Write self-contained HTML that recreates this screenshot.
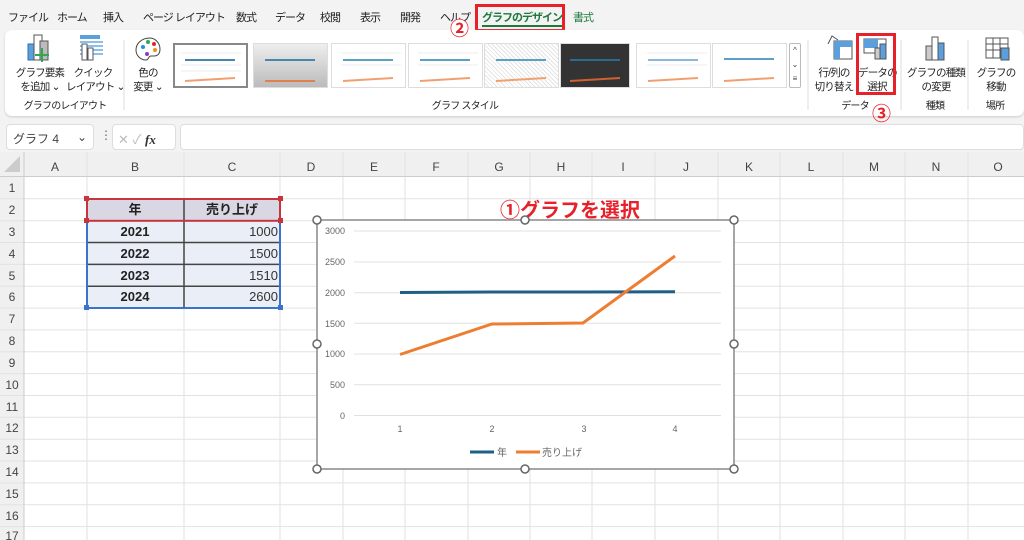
<!DOCTYPE html>
<html><head><meta charset="utf-8"><style>
*{margin:0;padding:0;box-sizing:border-box}
body{width:1024px;height:540px;overflow:hidden;background:#f3f3f3;font-family:"Liberation Sans","Noto Sans CJK JP",sans-serif;position:relative;color:#222}
.a{position:absolute;white-space:nowrap}
.tab{position:absolute;top:9px;font-size:11px;letter-spacing:-1px;color:#222}
.lbl{font-size:10.5px;letter-spacing:-0.8px;text-align:center;line-height:14px;color:#222}
.th{position:absolute;top:43px;width:75px;height:45px;background:#fff;border:1px solid #ddd}
</style></head><body>
<!-- tabs -->
<div class="tab" style="left:8px">ファイル</div>
<div class="tab" style="left:57px">ホーム</div>
<div class="tab" style="left:103px">挿入</div>
<div class="tab" style="left:143px">ページ レイアウト</div>
<div class="tab" style="left:236px">数式</div>
<div class="tab" style="left:275px">データ</div>
<div class="tab" style="left:320px">校閲</div>
<div class="tab" style="left:360px">表示</div>
<div class="tab" style="left:400px">開発</div>
<div class="tab" style="left:440px">ヘルプ</div>
<div class="a" style="left:475px;top:4px;width:90px;height:28px;border:3px solid #e8202a;background:#f3f3f3"></div>
<div class="tab" style="left:482px;color:#1e7a3c;font-weight:bold;font-size:11px;border-bottom:2px solid #1e7a3c">グラフのデザイン</div>
<div class="tab" style="left:573px;color:#1e7a3c">書式</div>
<!-- ribbon -->
<div class="a" style="left:5px;top:30px;width:1019px;height:86px;background:#fff;border-radius:7px;box-shadow:0 1px 2px #ccc"></div>
<div class="a" style="left:450px;top:19px;font-size:19px;color:#e8202a;font-weight:bold;background:#fff;border-radius:50%;line-height:22px">②</div>
<svg class="a" style="left:0;top:30px" width="1024" height="90">
<g fill="none">
<rect x="28" y="14" width="8" height="16" fill="#5ba0dc" stroke="#2d6fb0"/><rect x="34" y="5" width="8" height="25" fill="#fff" stroke="#555"/><rect x="40" y="11" width="8" height="19" fill="#bbb" stroke="#555"/><path d="M42 18v14M35 25h14" stroke="#2fa84f" stroke-width="2"/>
<rect x="80" y="5" width="20" height="4" fill="#5ba0dc"/><path d="M80 12h23M80 16h23M80 20h23M80 24h23" stroke="#8cc0ea" stroke-width="2"/><rect x="82" y="14" width="5" height="16" fill="#fff" stroke="#555"/><rect x="88" y="18" width="5" height="12" fill="#fff" stroke="#555"/>
<path d="M150 8c-9 0-14 6-14 12s5 10 10 10c3 0 2-4 5-4s9 1 9-7c0-6-5-11-10-11z" fill="#fff" stroke="#444"/>
<circle cx="143" cy="17" r="2" fill="#2c8de0"/><circle cx="148" cy="12" r="2" fill="#2fa84f"/><circle cx="154" cy="14" r="2" fill="#e8202a"/><circle cx="155" cy="20" r="2" fill="#e89020"/><circle cx="147" cy="24" r="2" fill="#8a3dc0"/>
<path d="M124 10v70M808 10v70M901 10v70M968 10v70" stroke="#ddd"/>
<rect x="834" y="11" width="18" height="18" fill="#fff" stroke="#555"/><rect x="834" y="11" width="18" height="6" fill="#5ba0dc"/><rect x="834" y="11" width="6" height="18" fill="#5ba0dc"/><path d="M828 14l4-8 6 4" stroke="#555"/>
<rect x="864" y="9" width="22" height="14" fill="#fff" stroke="#555"/><rect x="864" y="9" width="14" height="9" fill="#5ba0dc"/><rect x="875" y="18" width="5" height="11" fill="#ccc" stroke="#555"/><rect x="880" y="14" width="6" height="15" fill="#5ba0dc" stroke="#555"/>
<rect x="926" y="16" width="6" height="14" fill="#ccc" stroke="#555"/><rect x="932" y="7" width="6" height="23" fill="#fff" stroke="#555"/><rect x="938" y="13" width="6" height="17" fill="#5ba0dc" stroke="#555"/>
<rect x="986" y="8" width="22" height="20" fill="#fff" stroke="#555"/><path d="M986 14h22M986 20h22M993 8v20M1000 8v20" stroke="#555"/><rect x="1001" y="18" width="8" height="12" fill="#5ba0dc" stroke="#555"/>
</g></svg>
<div class="a lbl" style="left:14px;top:66px;width:52px">グラフ要素<br>を追加 ⌄</div>
<div class="a lbl" style="left:66px;top:66px;width:54px">クイック<br>レイアウト ⌄</div>
<div class="a lbl" style="left:128px;top:66px;width:40px">色の<br>変更 ⌄</div>
<div class="a lbl" style="left:20px;top:100px;width:90px;font-size:10px">グラフのレイアウト</div>
<div class="a lbl" style="left:420px;top:100px;width:90px;font-size:10px">グラフ スタイル</div>
<div class="a lbl" style="left:810px;top:66px;width:48px">行/列の<br>切り替え</div>
<div class="a lbl" style="left:858px;top:66px;width:38px">データの<br>選択</div>
<div class="a" style="left:856px;top:33px;width:40px;height:62px;border:3px solid #e8202a"></div>
<div class="a lbl" style="left:835px;top:100px;width:40px;font-size:10px">データ</div>
<div class="a" style="left:872px;top:99px;font-size:19px;color:#e8202a;font-weight:bold">③</div>
<div class="a lbl" style="left:905px;top:66px;width:62px">グラフの種類<br>の変更</div>
<div class="a lbl" style="left:915px;top:100px;width:40px;font-size:10px">種類</div>
<div class="a lbl" style="left:972px;top:66px;width:48px">グラフの<br>移動</div>
<div class="a lbl" style="left:975px;top:100px;width:40px;font-size:10px">場所</div>
<!-- gallery -->
<div class="th" style="left:173px;border:2px solid #888"></div>
<div class="th" style="left:253px;background:linear-gradient(#eee,#bbb)"></div>
<div class="th" style="left:331px"></div>
<div class="th" style="left:408px"></div>
<div class="th" style="left:484px;background:repeating-linear-gradient(45deg,#fff 0 2px,#e4e4e4 2px 3px)"></div>
<div class="th" style="left:560px;background:#333;width:70px"></div>
<div class="th" style="left:636px"></div>
<div class="th" style="left:712px"></div>
<svg class="a" style="left:173px;top:43px" width="620" height="45">
<g stroke="#eee"><path d="M8 10h60M8 22h60M8 28h60M168 10h60M168 22h60M245 10h60M245 22h60M474 10h60M474 22h60"/></g>
<g stroke-width="2">
<path d="M12 17h50" stroke="#4a86ab"/><path d="M12 38l50-3" stroke="#f0a070"/>
<path d="M92 17h50" stroke="#4a86ab"/><path d="M92 38h50" stroke="#e08050"/>
<path d="M170 17h50" stroke="#5aa0c8"/><path d="M170 38l50-3" stroke="#f0a070"/>
<path d="M247 17h50" stroke="#5aa0c8"/><path d="M247 38l50-3" stroke="#f0a070"/>
<path d="M323 17h50" stroke="#5aa0c8"/><path d="M323 38l50-3" stroke="#f0a070"/>
<path d="M397 17h50" stroke="#2d6a90"/><path d="M397 38l50-3" stroke="#d06030"/>
<path d="M475 17h50" stroke="#8ab8d8"/><path d="M475 38l50-3" stroke="#f0a070"/>
<path d="M551 16h50" stroke="#5aa0c8"/><path d="M551 38l50-3" stroke="#f0a070"/>
</g></svg>
<div class="a" style="left:789px;top:43px;width:12px;height:45px;border:1px solid #bbb;border-radius:2px;background:#fff;font-size:8px;text-align:center;line-height:14px;color:#444">^<br>⌄<br>≡</div>
<!-- formula bar -->
<div class="a" style="left:6px;top:124px;width:88px;height:26px;background:#fff;border:1px solid #ddd;border-radius:4px;font-size:12px;color:#444;padding:5px 6px">グラフ 4<span style="float:right">⌄</span></div>
<div class="a" style="left:100px;top:128px;font-size:12px;color:#666">⋮</div>
<div class="a" style="left:112px;top:124px;width:64px;height:26px;background:#fff;border:1px solid #ddd;border-radius:4px;font-size:13px;color:#bbb;padding:4px 5px">✕ ✓ <i style="color:#333;font-family:'Liberation Serif',serif;font-weight:bold">fx</i></div>
<div class="a" style="left:180px;top:124px;width:844px;height:26px;background:#fff;border:1px solid #ddd;border-radius:4px"></div>
<!-- grid -->
<svg class="a" style="left:0;top:152px" width="1024" height="388" font-family="Liberation Sans" font-size="12" fill="#444">
<rect x="0" y="0" width="1024" height="24" fill="#f0f0f0"/>
<rect x="0" y="0" width="24" height="388" fill="#f0f0f0"/>
<rect x="24" y="24" width="1000" height="364" fill="#fff"/>
<path d="M4 20l16-16v16z" fill="#ccc"/>
<g stroke="#e2e2e2">
<path d="M87 0v388M184 0v388M280 0v388M343 0v388M405 0v388M468 0v388M530 0v388M592 0v388M655 0v388M718 0v388M780 0v388M843 0v388M905 0v388M968 0v388"/>
<path d="M0 46.8h1024M0 68.7h1024M0 90.5h1024M0 112.4h1024M0 134.2h1024M0 156.1h1024M0 177.9h1024M0 199.8h1024M0 221.6h1024M0 243.5h1024M0 265.3h1024M0 287.2h1024M0 309h1024M0 330.9h1024M0 352.7h1024M0 374.6h1024"/>
</g>
<path d="M0 24.5h1024M24 0v388" stroke="#ccc"/>
<g text-anchor="middle">
<text x="55" y="19">A</text><text x="135" y="19">B</text><text x="232" y="19">C</text><text x="311" y="19">D</text><text x="374" y="19">E</text><text x="436" y="19">F</text><text x="499" y="19">G</text><text x="561" y="19">H</text><text x="623" y="19">I</text><text x="686" y="19">J</text><text x="749" y="19">K</text><text x="811" y="19">L</text><text x="874" y="19">M</text><text x="936" y="19">N</text><text x="998" y="19">O</text>
<text x="12" y="40">1</text><text x="12" y="62">2</text><text x="12" y="84">3</text><text x="12" y="106">4</text><text x="12" y="128">5</text><text x="12" y="149">6</text><text x="12" y="171">7</text><text x="12" y="193">8</text><text x="12" y="215">9</text><text x="12" y="237">10</text><text x="12" y="259">11</text><text x="12" y="280">12</text><text x="12" y="302">13</text><text x="12" y="324">14</text><text x="12" y="346">15</text><text x="12" y="368">16</text><text x="12" y="388">17</text>
</g>
<rect x="87" y="47" width="193" height="21.9" fill="#d9d7e3"/>
<rect x="87" y="68.7" width="193" height="87.4" fill="#e9eef7"/>
<g stroke="#444" stroke-width="1.5"><path d="M88 90.5h191M88 112.4h191M88 134.2h191M184 48v107"/></g>
<rect x="87" y="47" width="193" height="21.8" fill="none" stroke="#c8343c" stroke-width="2"/>
<path d="M87 69v87h193V69" fill="none" stroke="#3b73cc" stroke-width="2"/>
<g fill="#c8343c"><rect x="84" y="44" width="5" height="5"/><rect x="278" y="44" width="5" height="5"/><rect x="84" y="66" width="5" height="5"/><rect x="278" y="66" width="5" height="5"/></g>
<g fill="#3b73cc"><rect x="84" y="153" width="5" height="5"/><rect x="278" y="153" width="5" height="5"/></g>
<g font-weight="bold" fill="#222" font-size="13" text-anchor="middle" font-family="Liberation Sans,Noto Sans CJK JP">
<text x="135" y="62">年</text><text x="232" y="62">売り上げ</text>
<text x="135" y="84">2021</text><text x="135" y="106">2022</text><text x="135" y="128">2023</text><text x="135" y="149">2024</text>
</g>
<g fill="#333" font-size="13" text-anchor="end"><text x="278" y="84">1000</text><text x="278" y="106">1500</text><text x="278" y="128">1510</text><text x="278" y="149">2600</text></g>
</svg>
<div class="a" style="left:500px;top:194px;font-size:20px;font-weight:bold;color:#e8202a;font-family:'Liberation Sans','Noto Sans CJK JP',sans-serif">①グラフを選択</div>
<svg class="a" style="left:0;top:0" width="1024" height="540" font-family="Liberation Sans,Noto Sans CJK JP" font-size="9" fill="#666">
<rect x="317" y="220" width="417" height="249" fill="#fff" stroke="#888" stroke-width="1.5"/>
<g stroke="#e0e0e0"><path d="M354 231h367M354 262h367M354 292.7h367M354 323.3h367M354 354h367M354 384.7h367M354 415.5h367"/></g>
<g text-anchor="end"><text x="345" y="234">3000</text><text x="345" y="265">2500</text><text x="345" y="296">2000</text><text x="345" y="327">1500</text><text x="345" y="357">1000</text><text x="345" y="388">500</text><text x="345" y="419">0</text></g>
<g text-anchor="middle"><text x="400" y="432">1</text><text x="492" y="432">2</text><text x="584" y="432">3</text><text x="675" y="432">4</text></g>
<path d="M400 292.5L492 292L584 292L675 291.7" fill="none" stroke="#1f5f85" stroke-width="3"/>
<path d="M400 354.5L492 324L583 323L675 256" fill="none" stroke="#ed7d31" stroke-width="3"/>
<path d="M470 452h24" stroke="#1f5f85" stroke-width="3"/><text x="497" y="456" font-size="10">年</text>
<path d="M516 452h24" stroke="#ed7d31" stroke-width="3"/><text x="542" y="456" font-size="10">売り上げ</text>
<g fill="#fff" stroke="#666" stroke-width="1.5"><circle cx="317" cy="220" r="4"/><circle cx="525" cy="220" r="4"/><circle cx="734" cy="220" r="4"/><circle cx="317" cy="344" r="4"/><circle cx="734" cy="344" r="4"/><circle cx="317" cy="469" r="4"/><circle cx="525" cy="469" r="4"/><circle cx="734" cy="469" r="4"/></g>
</svg>
</body></html>
